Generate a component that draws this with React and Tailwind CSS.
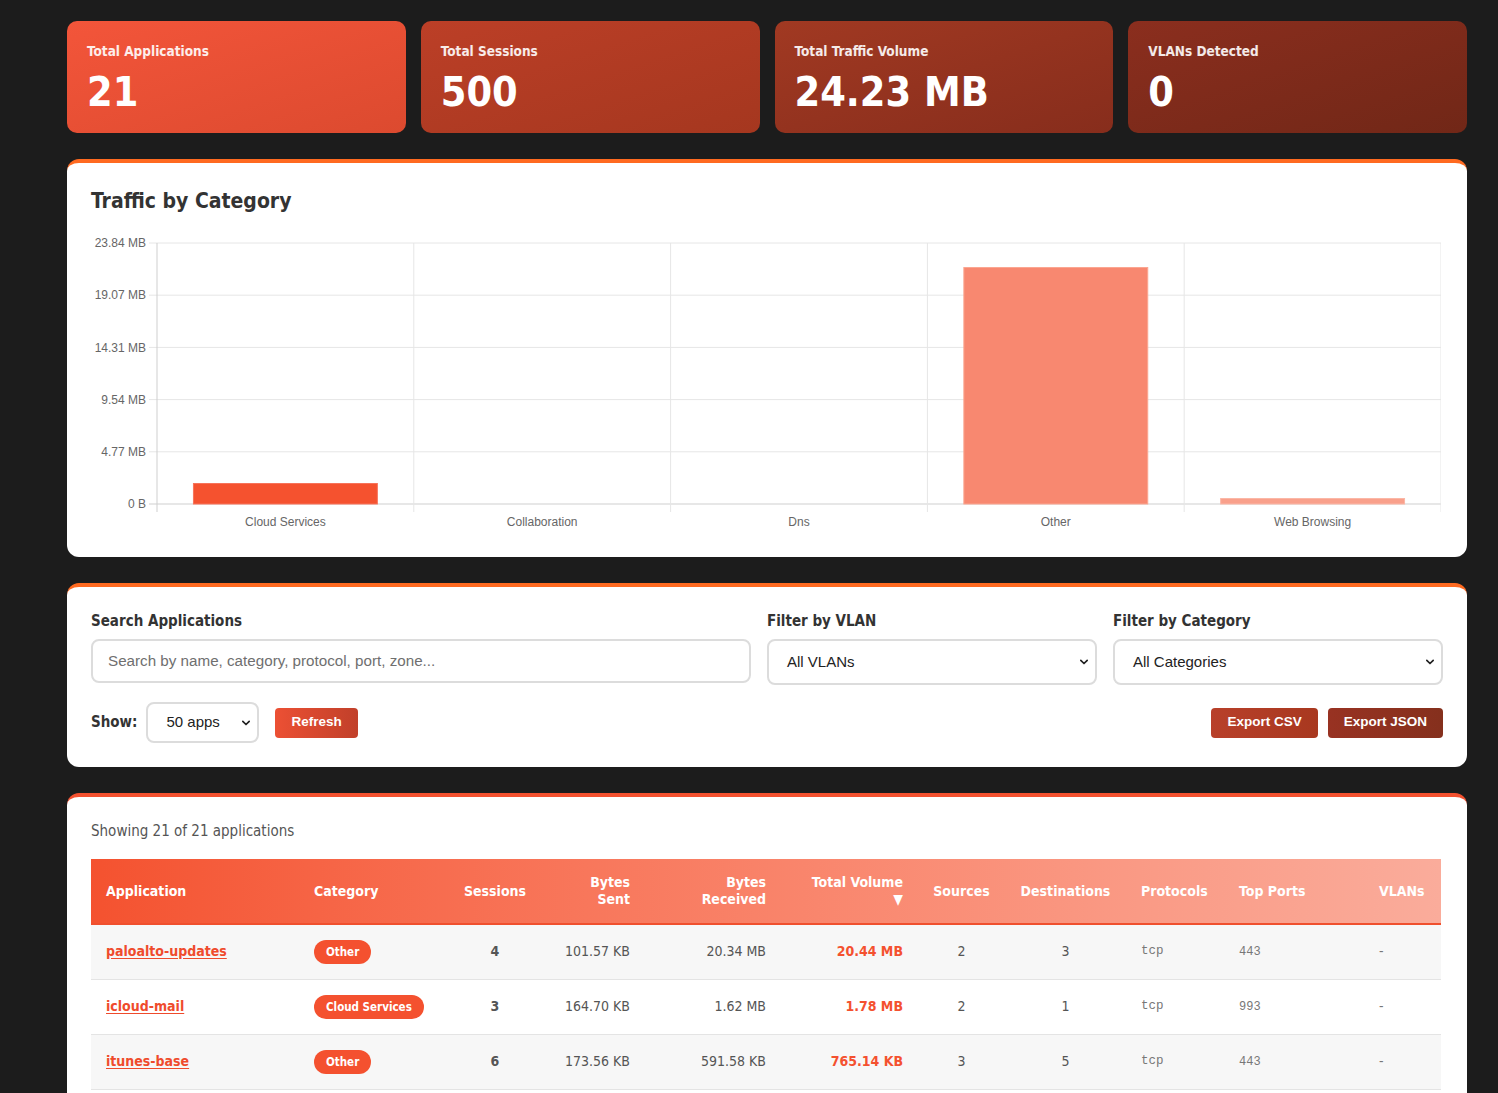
import React from "react";

const UI = { fontFamily: '"DejaVu Sans Condensed", "DejaVu Sans", sans-serif' };
const ARIAL = { fontFamily: '"Liberation Sans", Arial, sans-serif' };
const MONO = { fontFamily: '"Liberation Mono", "DejaVu Sans Mono", monospace' };

function StatCard({ label, value, cls }) {
  return (
    <div className={`rounded-[10px] p-5 h-[112px] ${cls}`}>
      <div className="text-[13.5px] leading-5 font-bold text-white/90">{label}</div>
      <div className="mt-[10px] text-[41px] leading-[42px] font-bold text-white">{value}</div>
    </div>
  );
}

function Chevron() {
  return (
    <svg width="10" height="7" viewBox="0 0 10 7" className="absolute right-[6px] top-1/2 -translate-y-1/2 pointer-events-none">
      <polyline points="1.8,1.8 5,5 8.2,1.8" fill="none" stroke="#222" strokeWidth="1.7" strokeLinecap="round" strokeLinejoin="round" />
    </svg>
  );
}

function Select({ value, cls }) {
  return (
    <div className={`relative border-2 border-[#dcdcdc] rounded-lg bg-white flex items-center ${cls}`}>
      <span className="text-[15px] text-[#222]" style={ARIAL}>{value}</span>
      <Chevron />
    </div>
  );
}

function Chart() {
  const left = 66;
  const right = 1350;
  const colW = (right - left) / 5;
  const zeroY = 271;
  const top = 10;
  const step = (zeroY - top) / 5;
  const yLabels = ["23.84 MB", "19.07 MB", "14.31 MB", "9.54 MB", "4.77 MB", "0 B"];
  const cats = ["Cloud Services", "Collaboration", "Dns", "Other", "Web Browsing"];
  const bars = [
    { h: 21, fill: "#f5522f", stroke: "#f7735a" },
    { h: 0 },
    { h: 0 },
    { h: 237, fill: "#f88870", stroke: "#fba691" },
    { h: 6, fill: "#f9a08b", stroke: "#fbb7a6" },
  ];
  const barW = colW * 0.72;
  return (
    <svg width="1350" height="300" viewBox="0 0 1350 300" style={ARIAL}>
      {yLabels.map((l, i) => {
        const y = top + i * step;
        return (
          <g key={l}>
            <line x1={58} x2={right} y1={y} y2={y} stroke={i === 5 ? "#cfcfcf" : "#e6e6e6"} strokeWidth="1" />
            <text x={55} y={y + 1} textAnchor="end" dominantBaseline="middle" fontSize="12" fill="#666">{l}</text>
          </g>
        );
      })}
      {[0, 1, 2, 3, 4, 5].map((i) => (
        <line key={i} x1={left + i * colW} x2={left + i * colW} y1={top} y2={zeroY + 8} stroke={i === 0 ? "#cfcfcf" : "#e6e6e6"} strokeWidth="1" />
      ))}
      {bars.map((b, i) =>
        b.h > 0 ? (
          <rect key={i} x={left + i * colW + (colW - barW) / 2 + 0.5} y={zeroY - b.h + 0.5} width={barW - 1} height={b.h - 0.5} fill={b.fill} stroke={b.stroke} strokeWidth="1" />
        ) : null
      )}
      {cats.map((c, i) => (
        <text key={c} x={left + i * colW + colW / 2} y={290} textAnchor="middle" dominantBaseline="middle" fontSize="12" fill="#666">{c}</text>
      ))}
    </svg>
  );
}

const rows = [
  { app: "paloalto-updates", cat: "Other", sess: 4, sent: "101.57 KB", recv: "20.34 MB", total: "20.44 MB", src: 2, dst: 3, proto: "tcp", ports: "443", vlan: "-", bg: "bg-[#f7f7f7]" },
  { app: "icloud-mail", cat: "Cloud Services", sess: 3, sent: "164.70 KB", recv: "1.62 MB", total: "1.78 MB", src: 2, dst: 1, proto: "tcp", ports: "993", vlan: "-", bg: "bg-white" },
  { app: "itunes-base", cat: "Other", sess: 6, sent: "173.56 KB", recv: "591.58 KB", total: "765.14 KB", src: 3, dst: 5, proto: "tcp", ports: "443", vlan: "-", bg: "bg-[#f7f7f7]" },
];

export default function App() {
  return (
    <div className="min-h-screen bg-[#1c1c1c] pt-[21px] pb-10" style={UI}>
      <div className="ml-[67px] w-[1400px] flex flex-col gap-[26px]">
        <div className="grid grid-cols-4 gap-[15px]">
          <StatCard label="Total Applications" value="21" cls="bg-gradient-to-br from-[#f3553a] to-[#dc4a2f]" />
          <StatCard label="Total Sessions" value="500" cls="bg-gradient-to-br from-[#bc3f27] to-[#a5371f]" />
          <StatCard label="Total Traffic Volume" value="24.23 MB" cls="bg-gradient-to-br from-[#a13922] to-[#872d1c]" />
          <StatCard label="VLANs Detected" value="0" cls="bg-gradient-to-br from-[#8b2e1e] to-[#712717]" />
        </div>

        <div className="bg-white rounded-xl border-t-4 border-[#ff6a20] px-6 pt-6 pb-6">
          <h2 className="text-[21px] leading-7 font-bold text-[#333]">Traffic by Category</h2>
          <div className="mt-[18px]">
            <Chart />
          </div>
        </div>

        <div className="bg-white rounded-xl border-t-4 border-[#ff6a20] px-6 pt-6 pb-6">
          <div className="grid grid-cols-[2fr_1fr_1fr] gap-4">
            <div>
              <div className="text-[15px] leading-5 font-bold text-[#333]">Search Applications</div>
              <div className="mt-2 h-[44px] border-2 border-[#dcdcdc] rounded-lg flex items-center px-[15px]">
                <span className="text-[15.2px] text-[#6f6f6f]" style={ARIAL}>Search by name, category, protocol, port, zone...</span>
              </div>
            </div>
            <div>
              <div className="text-[15px] leading-5 font-bold text-[#333]">Filter by VLAN</div>
              <Select value="All VLANs" cls="mt-2 h-[46px] pl-[18px]" />
            </div>
            <div>
              <div className="text-[15px] leading-5 font-bold text-[#333]">Filter by Category</div>
              <Select value="All Categories" cls="mt-2 h-[46px] pl-[18px]" />
            </div>
          </div>
          <div className="mt-[17px] flex items-center">
            <span className="text-[15px] font-bold text-[#333]">Show:</span>
            <Select value="50 apps" cls="ml-[9px] w-[113px] h-[41px] pl-[18px]" />
            <button className="ml-4 h-[30px] px-4 rounded-[4px] bg-gradient-to-r from-[#ec5034] to-[#c1402a] text-white text-[13.5px] font-bold" style={ARIAL}>Refresh</button>
            <div className="ml-auto flex gap-[10px]">
              <button className="h-[30px] px-4 rounded-[4px] bg-gradient-to-r from-[#b8402a] to-[#a8381f] text-white text-[13.5px] font-bold" style={ARIAL}>Export CSV</button>
              <button className="h-[30px] px-4 rounded-[4px] bg-gradient-to-r from-[#983222] to-[#85301d] text-white text-[13.5px] font-bold" style={ARIAL}>Export JSON</button>
            </div>
          </div>
        </div>

        <div className="bg-white rounded-xl border-t-4 border-[#f4512f] px-6 pt-6 pb-6">
          <div className="text-[15px] leading-5 text-[#555]">Showing 21 of 21 applications</div>
          <table className="mt-[18px] w-[1350px] table-fixed border-collapse">
            <colgroup>
              <col style={{ width: 208 }} />
              <col style={{ width: 150 }} />
              <col style={{ width: 92 }} />
              <col style={{ width: 104 }} />
              <col style={{ width: 136 }} />
              <col style={{ width: 137 }} />
              <col style={{ width: 87 }} />
              <col style={{ width: 121 }} />
              <col style={{ width: 98 }} />
              <col style={{ width: 140 }} />
              <col style={{ width: 77 }} />
            </colgroup>
            <thead>
              <tr className="bg-gradient-to-r from-[#f4522f] to-[#faac9b] text-white text-[14px] leading-[17px] font-bold border-b-2 border-[#f0502e] h-[65px]">
                <th className="px-[15px] text-left">Application</th>
                <th className="px-[15px] text-left">Category</th>
                <th className="px-[15px] text-center">Sessions</th>
                <th className="px-[15px] text-right">Bytes<br />Sent</th>
                <th className="px-[15px] text-right">Bytes<br />Received</th>
                <th className="px-[15px] text-right">Total Volume<br />▼</th>
                <th className="px-[15px] text-center">Sources</th>
                <th className="px-[15px] text-center">Destinations</th>
                <th className="px-[15px] text-left">Protocols</th>
                <th className="px-[15px] text-left">Top Ports</th>
                <th className="px-[15px] text-left">VLANs</th>
              </tr>
            </thead>
            <tbody>
              {rows.map((r) => (
                <tr key={r.app} className={`${r.bg} h-[55px] border-b border-[#e4e4e4] text-[14px] text-[#555]`}>
                  <td className="px-[15px]">
                    <span className="font-bold text-[#ef4b2c] underline underline-offset-2">{r.app}</span>
                  </td>
                  <td className="px-[15px]">
                    <span className="inline-block rounded-full bg-[#f4512f] text-white text-[11.5px] leading-6 font-bold px-3">{r.cat}</span>
                  </td>
                  <td className="px-[15px] text-center font-bold">{r.sess}</td>
                  <td className="px-[15px] text-right">{r.sent}</td>
                  <td className="px-[15px] text-right">{r.recv}</td>
                  <td className="px-[15px] text-right font-bold text-[#f4512f]">{r.total}</td>
                  <td className="px-[15px] text-center">{r.src}</td>
                  <td className="px-[15px] text-center">{r.dst}</td>
                  <td className="px-[15px] text-[12.5px] text-[#777]" style={MONO}>{r.proto}</td>
                  <td className="px-[15px] text-[12px] text-[#777]" style={MONO}>{r.ports}</td>
                  <td className="px-[15px] text-[#777]">{r.vlan}</td>
                </tr>
              ))}
            </tbody>
          </table>
        </div>
      </div>
    </div>
  );
}
